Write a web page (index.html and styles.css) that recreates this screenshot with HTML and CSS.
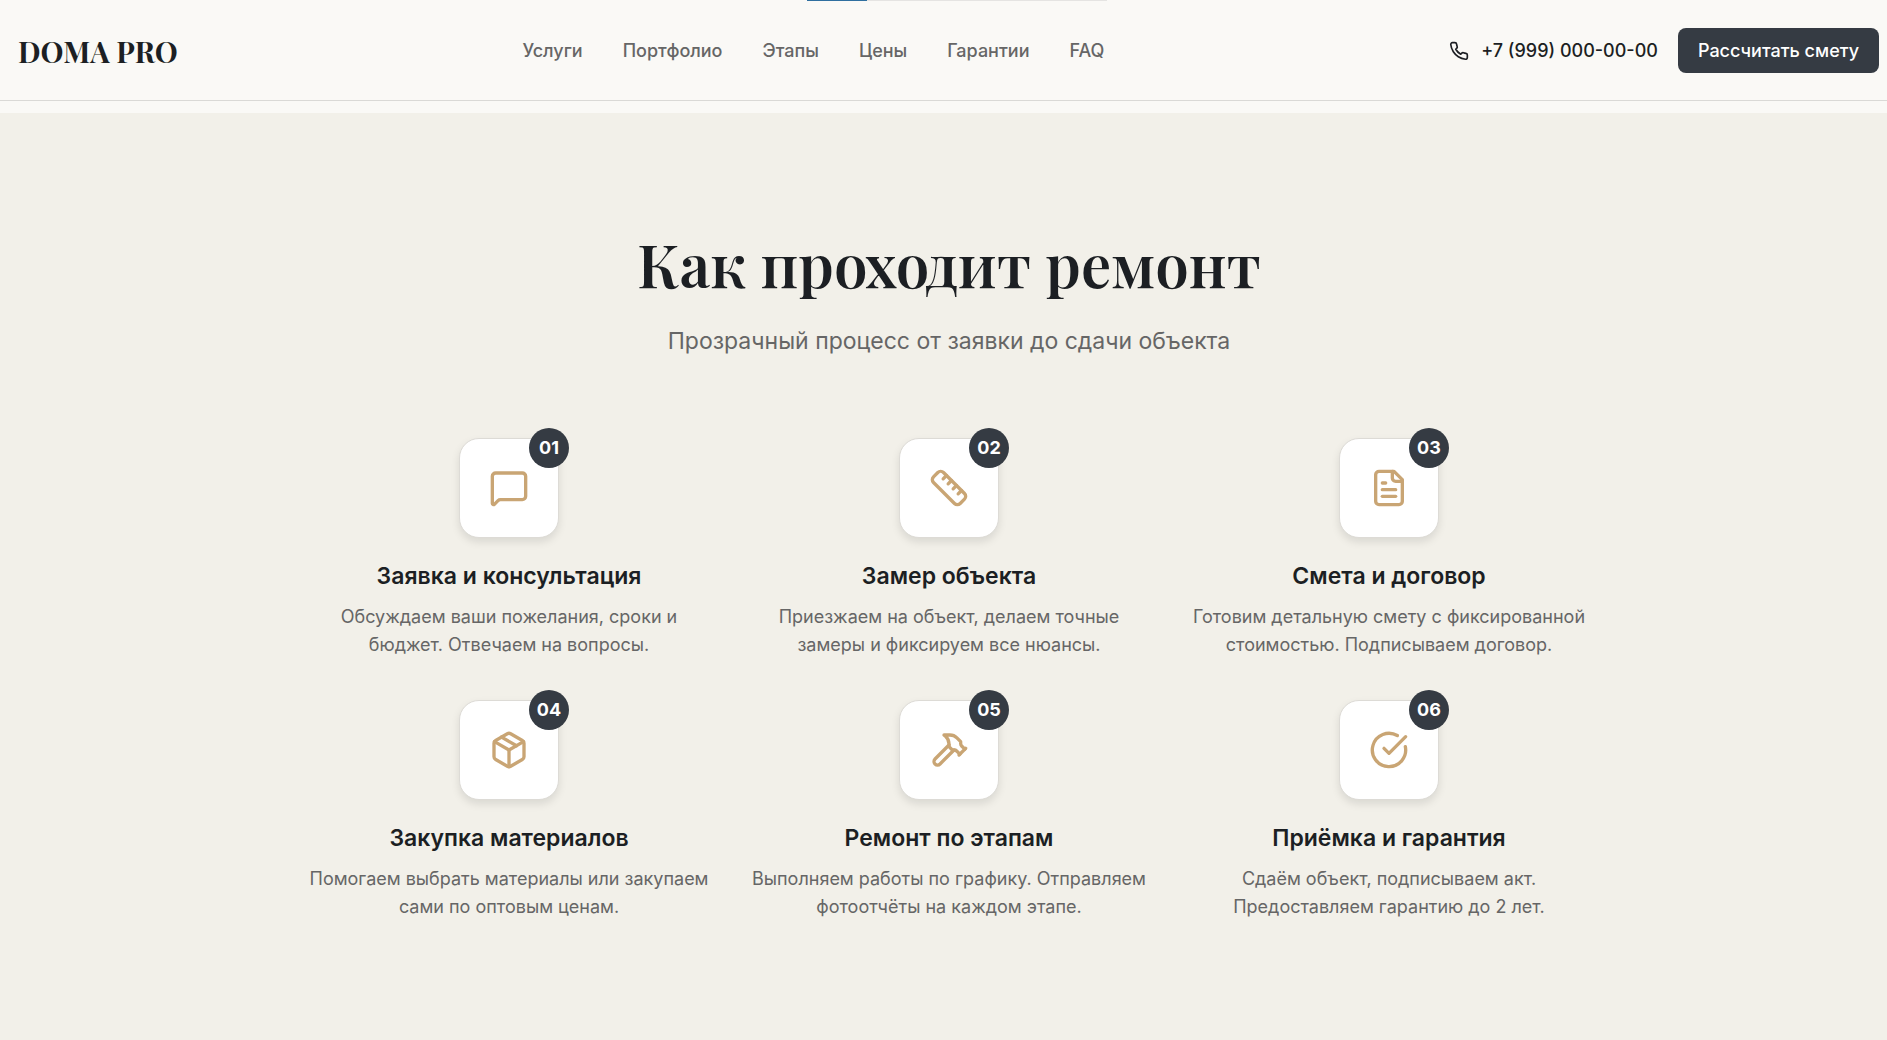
FILE: index.html
```html
<!DOCTYPE html>
<html lang="ru">
<head>
  <meta charset="UTF-8">
  <meta name="viewport" content="width=device-width, initial-scale=1.0">
  <title>DOMA PRO</title>
  <link rel="stylesheet" href="styles.css">
</head>
<body>

<header class="header">
  <div class="progress"><div class="progress-bar"></div></div>
  <a href="#" class="logo">DOMA PRO</a>
  <nav class="nav">
    <a href="#services">Услуги</a>
    <a href="#portfolio">Портфолио</a>
    <a href="#process">Этапы</a>
    <a href="#prices">Цены</a>
    <a href="#warranty">Гарантии</a>
    <a href="#faq">FAQ</a>
  </nav>
  <div class="header-actions">
    <a href="tel:+79990000000" class="phone">
      <svg class="phone-icon" viewBox="0 0 24 24"><path d="M22 16.92v3a2 2 0 0 1-2.18 2 19.79 19.79 0 0 1-8.63-3.07 19.5 19.5 0 0 1-6-6 19.79 19.79 0 0 1-3.07-8.67A2 2 0 0 1 4.11 2h3a2 2 0 0 1 2 1.72 12.84 12.84 0 0 0 .7 2.81 2 2 0 0 1-.45 2.11L8.09 9.91a16 16 0 0 0 6 6l1.27-1.27a2 2 0 0 1 2.11-.45 12.84 12.84 0 0 0 2.81.7A2 2 0 0 1 22 16.92z"/></svg>
      +7 (999) 000-00-00
    </a>
    <button type="button" class="btn">Рассчитать смету</button>
  </div>
</header>

<main class="process" id="process">
  <h2 class="section-title">Как проходит ремонт</h2>
  <p class="section-subtitle">Прозрачный процесс от заявки до сдачи объекта</p>

  <div class="steps">
    <div class="step">
      <div class="step-icon">
        <svg viewBox="0 0 24 24"><path d="M22 17a2 2 0 0 1-2 2H6.828a2 2 0 0 0-1.414.586l-2.202 2.202A.71.71 0 0 1 2 21.286V5a2 2 0 0 1 2-2h16a2 2 0 0 1 2 2z"/></svg>
        <span class="step-number">01</span>
      </div>
      <h3>Заявка и консультация</h3>
      <p>Обсуждаем ваши пожелания, сроки и бюджет. Отвечаем на вопросы.</p>
    </div>
    <div class="step">
      <div class="step-icon">
        <svg viewBox="0 0 24 24"><path d="M21.3 15.3a2.4 2.4 0 0 1 0 3.4l-2.6 2.6a2.4 2.4 0 0 1-3.4 0L2.7 8.7a2.41 2.41 0 0 1 0-3.4l2.6-2.6a2.41 2.41 0 0 1 3.4 0Z"/><path d="m14.5 12.5 2-2"/><path d="m11.5 9.5 2-2"/><path d="m8.5 6.5 2-2"/><path d="m17.5 15.5 2-2"/></svg>
        <span class="step-number">02</span>
      </div>
      <h3>Замер объекта</h3>
      <p>Приезжаем на объект, делаем точные замеры и фиксируем все нюансы.</p>
    </div>
    <div class="step">
      <div class="step-icon">
        <svg viewBox="0 0 24 24"><path d="M15 2H6a2 2 0 0 0-2 2v16a2 2 0 0 0 2 2h12a2 2 0 0 0 2-2V7Z"/><path d="M14 2v4a2 2 0 0 0 2 2h4"/><path d="M10 9H8"/><path d="M16 13H8"/><path d="M16 17H8"/></svg>
        <span class="step-number">03</span>
      </div>
      <h3>Смета и договор</h3>
      <p>Готовим детальную смету с фиксированной стоимостью. Подписываем договор.</p>
    </div>
    <div class="step">
      <div class="step-icon">
        <svg viewBox="0 0 24 24"><path d="m7.5 4.27 9 5.15"/><path d="M21 8a2 2 0 0 0-1-1.73l-7-4a2 2 0 0 0-2 0l-7 4A2 2 0 0 0 3 8v8a2 2 0 0 0 1 1.73l7 4a2 2 0 0 0 2 0l7-4A2 2 0 0 0 21 16Z"/><path d="m3.3 7 8.7 5 8.7-5"/><path d="M12 22V12"/></svg>
        <span class="step-number">04</span>
      </div>
      <h3>Закупка материалов</h3>
      <p>Помогаем выбрать материалы или закупаем сами по оптовым ценам.</p>
    </div>
    <div class="step">
      <div class="step-icon">
        <svg viewBox="0 0 24 24"><path d="m15 12-8.373 8.373a1 1 0 1 1-3-3L12 9"/><path d="m18 15 4-4"/><path d="m21.5 11.5-1.914-1.914A2 2 0 0 1 19 8.172V7l-2.26-2.26a6 6 0 0 0-4.202-1.756L9 2.96l.92.82A6.18 6.18 0 0 1 12 8.4V10l2 2h1.172a2 2 0 0 1 1.414.586L18.5 14.5"/></svg>
        <span class="step-number">05</span>
      </div>
      <h3>Ремонт по этапам</h3>
      <p>Выполняем работы по графику. Отправляем фотоотчёты на каждом этапе.</p>
    </div>
    <div class="step">
      <div class="step-icon">
        <svg viewBox="0 0 24 24"><path d="M21.801 10A10 10 0 1 1 17 3.335"/><path d="m9 11 3 3L22 4"/></svg>
        <span class="step-number">06</span>
      </div>
      <h3>Приёмка и гарантия</h3>
      <p>Сдаём объект, подписываем акт. Предоставляем гарантию до 2 лет.</p>
    </div>
  </div>
</main>

</body>
</html>
```
FILE: styles.css
```css
* {
  box-sizing: border-box;
}

body {
  margin: 0;
  min-height: 100vh;
  display: flex;
  flex-direction: column;
  font-family: Inter, "Liberation Sans", sans-serif;
  font-size: 18px;
  line-height: 28px;
  color: #1c1f23;
  background: #faf9f6;
}

a {
  color: inherit;
  text-decoration: none;
}

svg {
  fill: none;
  stroke: currentColor;
  stroke-width: 2;
  stroke-linecap: round;
  stroke-linejoin: round;
}

.header {
  position: relative;
  height: 101px;
  margin-bottom: 12px;
  padding: 1px 8px 0 18px;
  display: flex;
  justify-content: space-between;
  align-items: center;
  border-bottom: 1px solid #dad9d6;
}

.progress {
  position: absolute;
  top: 0;
  left: 50%;
  width: 300px;
  height: 1px;
  margin-left: -137px;
  background: #e5e4e2;
}

.progress-bar {
  width: 20%;
  height: 100%;
  background: #2f6f9f;
}

.logo {
  font-family: "Playfair Display", "Liberation Serif", serif;
  font-size: 29px;
  font-weight: 700;
}

.nav {
  display: flex;
  gap: 40px;
  font-weight: 500;
  color: #666666;
}

.header-actions {
  display: flex;
  align-items: center;
  gap: 20px;
}

.phone {
  display: flex;
  align-items: center;
  gap: 12px;
  font-weight: 500;
}

.phone-icon {
  width: 20px;
  height: 20px;
}

.btn {
  height: 45px;
  padding: 0 20px;
  border: none;
  border-radius: 8px;
  font: inherit;
  font-weight: 500;
  color: #ffffff;
  background: #353b43;
  cursor: pointer;
}

.process {
  flex: 1;
  padding: 114px 20px 120px 31px;
  text-align: center;
  background: #f2f0e9;
}

.section-title {
  margin: 0 0 26px;
  font-family: "Playfair Display", "Liberation Serif", serif;
  font-size: 60px;
  line-height: 72px;
  font-weight: 600;
}

.section-subtitle {
  margin: 0 0 81px;
  font-size: 23px;
  line-height: 32px;
  color: #666666;
}

.steps {
  max-width: 1280px;
  margin: 0 auto;
  display: grid;
  grid-template-columns: repeat(3, 1fr);
  gap: 41px 40px;
}

.step-icon {
  position: relative;
  width: 100px;
  height: 100px;
  margin: 0 auto 23px;
  display: flex;
  justify-content: center;
  align-items: center;
  border: 1px solid #dddbd6;
  border-radius: 20px;
  color: #c9a574;
  background: #ffffff;
  box-shadow: 0 4px 8px rgba(0, 0, 0, 0.1);
}

.step-icon svg {
  width: 40px;
  height: 40px;
}

.step-number {
  position: absolute;
  top: -11px;
  right: -11px;
  width: 40px;
  height: 40px;
  border-radius: 50%;
  font-weight: 700;
  line-height: 40px;
  color: #ffffff;
  background: #353b43;
}

.step h3 {
  margin: 0 0 12px;
  font-size: 23px;
  line-height: 30px;
  font-weight: 600;
}

.step p {
  margin: 0;
  color: #666666;
}
```
